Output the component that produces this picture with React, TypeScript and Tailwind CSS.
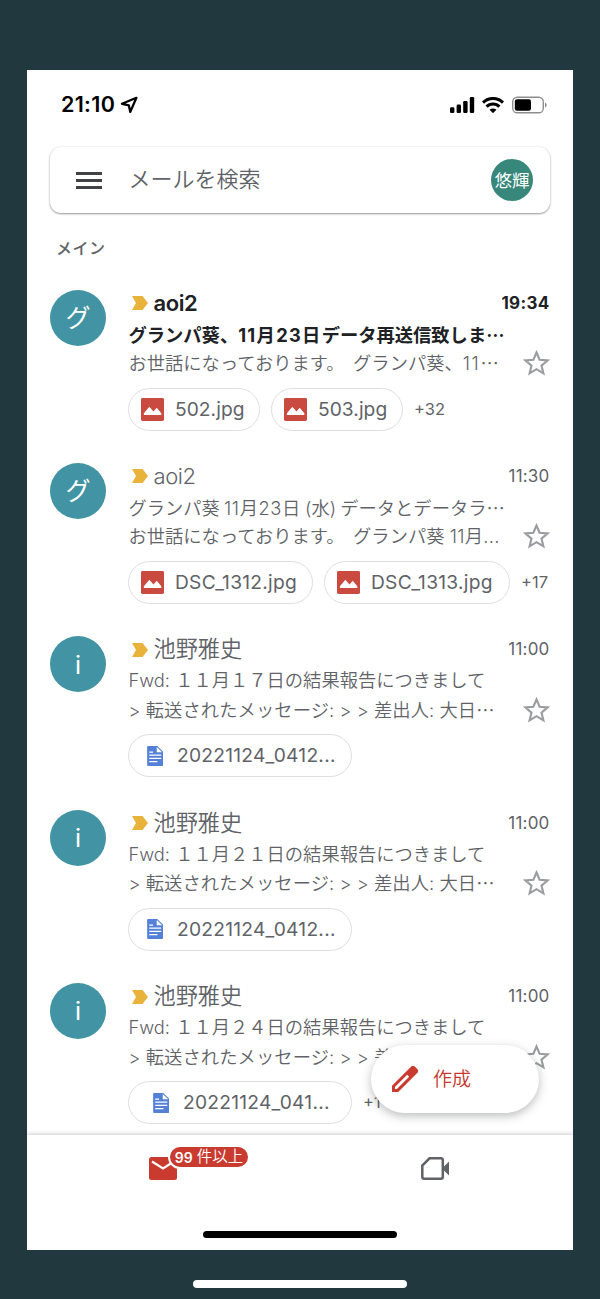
import React from "react";
import {clsx} from "clsx";

interface Attachment {
  name: string;
  type: "image" | "doc";
  className: string;
}

interface Mail {
  initial: string;
  sender: string;
  senderClass: string;
  time: string;
  subject: React.ReactNode;
  snippet: React.ReactNode;
  attachments: Attachment[];
  more?: string;
  unread?: boolean;
}

// full width ellipsis, centered on the line
const Dots = () => <span className="font-['Noto_Sans_CJK_JP',sans-serif]">…</span>;

const forwarded = (
  <span className="tracking-[0.08px]">
    {"> 転送されたメッセージ: > > 差出人: 大日"}
    <Dots />
  </span>
);

const mails: Mail[] = [
  {
    initial: "グ",
    sender: "aoi2",
    senderClass: "text-[22px] font-semibold tracking-[-0.4px]",
    time: "19:34",
    subject: (
      <>
        グランパ葵、<span className="tracking-[1.3px]">11月23日</span>
        データ再送信致しま
        <Dots />
      </>
    ),
    snippet: (
      <>
        お世話になっております。
        <span className="ml-[8.5px]">グランパ葵、</span>
        <span className="tracking-[1.6px]">11</span>
        <Dots />
      </>
    ),
    attachments: [
      {name: "502.jpg", type: "image", className: "w-[131.5px] tracking-[0.05px]"},
      {name: "503.jpg", type: "image", className: "w-[131.5px] tracking-[0.05px]"},
    ],
    more: "+32",
    unread: true,
  },
  {
    initial: "グ",
    sender: "aoi2",
    senderClass: "text-[22px] tracking-[-0.4px]",
    time: "11:30",
    subject: (
      <span className="[word-spacing:-1px]">
        グランパ葵 <span className="tracking-[0.6px]">11月23日</span>{" "}
        (水) データとデータラ
        <Dots />
      </span>
    ),
    snippet: (
      <>
        お世話になっております。
        <span className="ml-[8.5px]">グランパ葵 </span>
        <span className="tracking-[0.3px]">11月...</span>
      </>
    ),
    attachments: [
      {name: "DSC_1312.jpg", type: "image", className: "w-[184.5px] tracking-[0.25px]"},
      {name: "DSC_1313.jpg", type: "image", className: "w-[185.5px] tracking-[0.25px]"},
    ],
    more: "+17",
  },
  {
    initial: "i",
    sender: "池野雅史",
    senderClass: "text-[22.2px]",
    time: "11:00",
    subject: "Fwd: １１月１７日の結果報告につきまして",
    snippet: forwarded,
    attachments: [
      {name: "20221124_0412...", type: "doc", className: "w-[223.5px] pl-[17.5px]"},
    ],
  },
  {
    initial: "i",
    sender: "池野雅史",
    senderClass: "text-[22.2px]",
    time: "11:00",
    subject: "Fwd: １１月２１日の結果報告につきまして",
    snippet: forwarded,
    attachments: [
      {name: "20221124_0412...", type: "doc", className: "w-[223.5px] pl-[17.5px]"},
    ],
  },
  {
    initial: "i",
    sender: "池野雅史",
    senderClass: "text-[22.2px]",
    time: "11:00",
    subject: "Fwd: １１月２４日の結果報告につきまして",
    snippet: forwarded,
    attachments: [
      {name: "20221124_041...", type: "doc", className: "w-[223.5px] pl-[23.5px]"},
    ],
    more: "+1",
  },
];

const StatusBar = () => (
  <div className="flex h-[70px] shrink-0 items-center pl-[34px] pr-[25px] text-black">
    <span className="text-[21.5px] font-semibold tracking-[0.3px]">21:10</span>
    <svg viewBox="0 0 18 18" className="ml-[5px] size-[18px]" fill="none">
      <path
        d="M16.4 1.8 2 7.8l6.8 1.5 1.5 6.6z"
        stroke="currentColor"
        strokeWidth="2.3"
        strokeLinejoin="round"
      />
    </svg>
    <div className="ml-auto flex items-center">
      <svg viewBox="0 0 25 16" className="h-4 w-[25px]" fill="currentColor">
        <rect x="0" y="10.3" width="4.4" height="5.7" rx="1.3" />
        <rect x="6.6" y="7.6" width="4.4" height="8.4" rx="1.3" />
        <rect x="13.2" y="4" width="4.4" height="12" rx="1.3" />
        <rect x="19.8" y="0" width="4.4" height="16" rx="1.3" />
      </svg>
      <svg viewBox="0 0 22 16" className="ml-[7px] h-4 w-[22px]">
        <g fill="none" stroke="currentColor" strokeWidth="3.1">
          <path d="M1 5.6a14.2 14.2 0 0 1 20 0" />
          <path d="M4.6 9.7a9 9 0 0 1 12.8 0" />
        </g>
        <path d="M11 16.2 7.6 12.8a4.8 4.8 0 0 1 6.8 0z" fill="currentColor" />
      </svg>
      <svg viewBox="0 0 36 18" className="ml-[8px] h-[18px] w-[36px]">
        <rect
          x="0.7"
          y="1.2"
          width="30.6"
          height="15.6"
          rx="4.6"
          fill="none"
          stroke="#8e8e8e"
          strokeWidth="1.4"
        />
        <rect x="2.8" y="3.3" width="16.2" height="11.4" rx="2.2" />
        <path d="M33 6.4v5.2a2.8 2.8 0 0 0 0-5.2z" fill="#8e8e8e" />
      </svg>
    </div>
  </div>
);

const SearchBar = () => (
  <div className="mx-[23px] mt-[7.5px] flex h-[66px] shrink-0 items-center rounded-[11px] bg-white pl-[26px] pr-[17px] shadow-[0_1px_2px_rgba(0,0,0,0.4),0_0_2px_rgba(0,0,0,0.1)]">
    <div className="flex w-[26px] flex-col gap-[4px]">
      <span className="h-[3px] bg-[#414245]" />
      <span className="h-[3px] bg-[#414245]" />
      <span className="h-[3px] bg-[#414245]" />
    </div>
    <span className="-mt-[2px] ml-[26.5px] text-[22px] font-[350] text-[#5f6368]">
      メールを検索
    </span>
    <div className="ml-auto flex size-[42px] items-center justify-center rounded-full bg-[#37877a] pt-[2px] text-[17.5px] whitespace-nowrap text-white">
      悠輝
    </div>
  </div>
);

const ImageIcon = () => (
  <svg viewBox="0 0 24 24" className="size-[23px] shrink-0">
    <rect width="24" height="24" rx="1.5" fill="#cb4a3f" />
    <path
      d="M3 17.8v-2L8.7 9l4.3 5.2 3.4-3.9 4.8 5.5v2z"
      fill="#fff"
    />
  </svg>
);

const DocIcon = () => (
  <svg viewBox="0 0 17 21" className="h-[20px] w-[16.5px] shrink-0">
    <path d="M1 0h9.6L17 6.2V20a1 1 0 0 1-1 1H1a1 1 0 0 1-1-1V1a1 1 0 0 1 1-1z" fill="#5580d8" />
    <path d="M10.1 1v5.6h5.7z" fill="#fff" />
    <path
      d="M2.2 9.7h12.6M2.2 13h12.6M2.2 16.3h8.6M2.2 6.4h4"
      stroke="#fff"
      strokeWidth="1.3"
    />
  </svg>
);

const StarIcon = () => (
  <svg viewBox="0 0 27 26" className="h-[26px] w-[27px] shrink-0" fill="none">
    <path
      d="m13.5 2.5 3.1 7.2 8 .7-6.1 5.2 1.9 7.8-6.9-4.2-6.9 4.2 1.9-7.8-6.1-5.2 8-.7z"
      stroke="#9a9ca0"
      strokeWidth="2.1"
    />
  </svg>
);

const Chip = ({attachment}: {attachment: Attachment}) => {
  const isImage = attachment.type === "image";
  return (
    <div
      className={clsx(
        "flex h-[43px] shrink-0 items-center rounded-full border-[1.5px] border-[#dddee1] whitespace-nowrap",
        isImage ? "gap-[11px] pl-[12px]" : "gap-[14px] tracking-[0.25px]",
        attachment.className,
      )}
    >
      {isImage ? <ImageIcon /> : <DocIcon />}
      <span className="text-[19.2px] text-[#5f6368]">{attachment.name}</span>
    </div>
  );
};

const MailRow = ({mail}: {mail: Mail}) => (
  <div className="flex h-[173.4px] shrink-0 pr-[23.5px] pl-[23px]">
    <div className="flex size-[56px] shrink-0 items-center justify-center rounded-full bg-[#4293a3] pt-[2px] text-[25px] text-white">
      {mail.initial}
    </div>
    <div className="ml-[22px] flex min-w-0 flex-1 flex-col">
      <div
        className={clsx(
          "flex h-[30px] items-start pl-[1px] whitespace-nowrap",
          mail.unread ? "text-[#202124]" : "text-[#5f6368]",
        )}
      >
        <svg viewBox="0 0 16 14" className="mt-[6.5px] ml-[3px] h-[14px] w-4 shrink-0">
          <path d="M0 0h10.5L16 7l-5.500 7H0l4-7z" fill="#e9b23b" />
        </svg>
        <span
          className={clsx(
            "ml-[5.5px] leading-[26px]",
            !mail.unread && "font-[350]",
            mail.senderClass,
          )}
        >
          {mail.sender}
        </span>
        <span
          className={clsx(
            "ml-auto text-[17px] leading-[26px]",
            mail.unread ? "font-bold tracking-[0.3px]" : "tracking-[0.2px]",
          )}
        >
          {mail.time}
        </span>
      </div>
      <div
        className={clsx(
          "h-[29px] pl-[0.5px] text-[18.3px] leading-[29px] whitespace-nowrap",
          mail.unread ? "font-bold text-[#202124]" : "font-[350] text-[#5f6368]",
        )}
      >
        {mail.subject}
      </div>
      <div className="flex h-[29px] items-center justify-between pl-[0.5px]">
        <span className="text-[18.3px] leading-[29px] font-[350] whitespace-nowrap text-[#5f6368]">
          {mail.snippet}
        </span>
        <StarIcon />
      </div>
      <div className="mt-[10px] flex items-center gap-[11.5px]">
        {mail.attachments.map((item) => (
          <Chip key={item.name} attachment={item} />
        ))}
        {mail.more && (
          <span className="text-[16.5px] text-[#5f6368]">{mail.more}</span>
        )}
      </div>
    </div>
  </div>
);

const ComposeButton = () => (
  <button className="absolute right-[34px] bottom-[22px] flex h-[68px] w-[168px] items-center rounded-full bg-white pl-[21px] text-[19px] font-[350] text-[#c5372c] shadow-[0_3px_10px_rgba(60,64,67,0.35)]">
    <svg viewBox="0 0 26 26" className="size-[26px]">
      <path
        fillRule="evenodd"
        fill="#c93a2f"
        d="M0 19.800 19 .8a2.800 2.800 0 0 1 4 0l2.200 2.200a2.800 2.800 0 0 1 0 4L6.200 26H0zM2.900 21.100v2h2L17.200 10.800l-2-2z"
      />
    </svg>
    <span className="mt-[4px] ml-[15px]">作成</span>
  </button>
);

const BottomNav = () => (
  <div className="flex h-[115px] shrink-0 flex-col bg-white shadow-[0_-1px_4px_rgba(60,64,67,0.28)]">
    <div className="flex h-[68px] items-center pr-[2px]">
      <div className="flex w-1/2 justify-center">
        <div className="relative">
          <svg viewBox="0 0 28 23" className="h-[23px] w-[28px]">
            <rect width="28" height="23" rx="2.5" fill="#c93a2f" />
            <path d="m3 4.500 11 7 11-7" fill="none" stroke="#fff" strokeWidth="2.2" />
          </svg>
          <span className="absolute -top-[12px] left-[19px] flex h-[24px] w-[82px] items-center justify-center rounded-full border-2 border-white bg-[#c93a2f] text-[15.5px] font-[350] whitespace-nowrap text-white">
            <b className="mr-[4px] text-[14px] font-semibold">99</b>件以上
          </span>
        </div>
      </div>
      <div className="flex w-1/2 justify-center">
        <svg viewBox="0 0 28 23" className="h-[23px] w-[28px]" fill="none">
          <path
            d="M8.5 1.3h11.3a2 2 0 0 1 2 2v16.400a2 2 0 0 1-2 2H3.3a2 2 0 0 1-2-2V8.500z"
            stroke="#5f6368"
            strokeWidth="2.5"
          />
          <path d="M21 11.500 28 4.500v14z" fill="#5f6368" />
        </svg>
      </div>
    </div>
    <div className="mx-auto mt-[28.5px] h-[7px] w-[194px] rounded-full bg-black" />
  </div>
);

export default function App() {
  return (
    <div
      lang="ja"
      className="flex h-[1299px] w-[600px] flex-col items-center bg-[#22383f] pt-[69.5px] font-[Inter,'Noto_Sans_CJK_JP',sans-serif]"
    >
      <div className="flex h-[1180px] w-[546px] flex-col overflow-hidden bg-white">
        <StatusBar />
        <SearchBar />
        <div className="relative flex min-h-0 flex-1 flex-col overflow-hidden">
          <div className="mt-[20.5px] mb-[27px] h-[29px] shrink-0 pl-[29px] text-[16px] leading-[29px] font-medium tracking-[0.5px] text-[#5f6368]">
            メイン
          </div>
          {mails.map((mail, i) => (
            <MailRow key={i} mail={mail} />
          ))}
          <ComposeButton />
        </div>
        <BottomNav />
      </div>
      <div className="mt-[30.5px] h-[7.5px] w-[214px] rounded-full bg-white" />
    </div>
  );
}
